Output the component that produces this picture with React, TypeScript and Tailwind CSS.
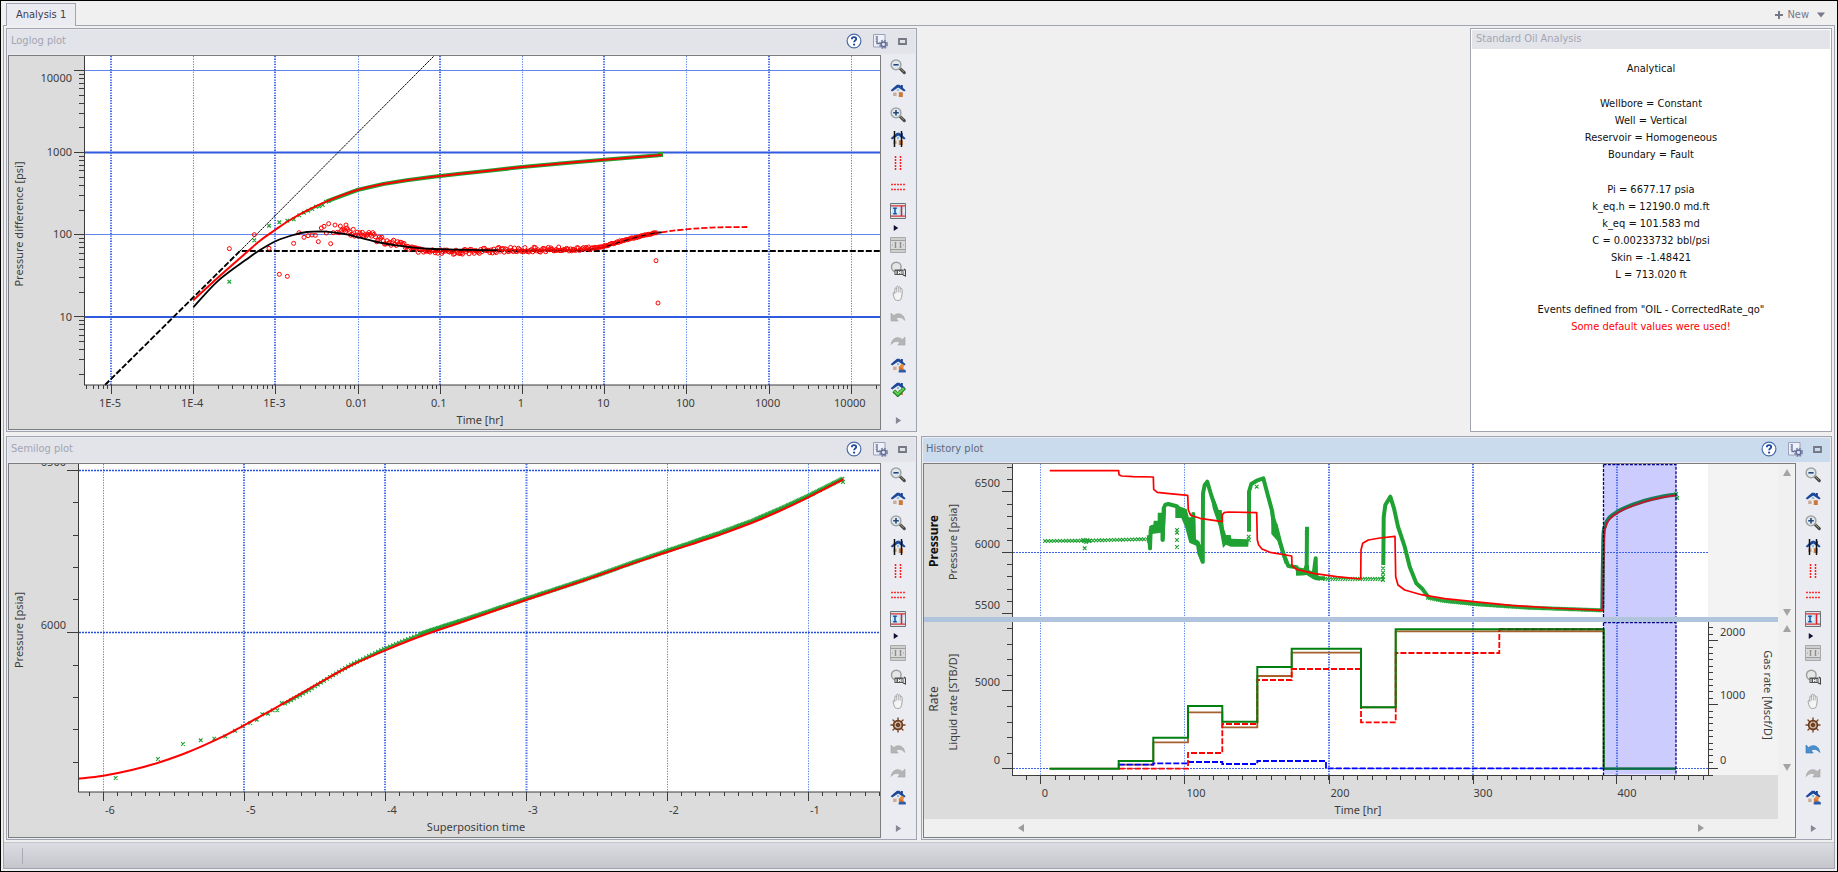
import type { ReactNode } from 'react'

type Pt = [number, number]

const BLUE = '#3b63e6'
const GREEN = '#1fa233'
const AXIS = '#3c3c3c'

// curves are digitised on a 3x grid, this brings them back to plot units
const place = (ox: number, oy: number, pts: Pt[]): Pt[] => pts.map(([x, y]) => [ox + x / 3, oy + y / 3])

const line = (pts: Pt[]) => 'M' + pts.map(([x, y]) => `${x.toFixed(1)} ${y.toFixed(1)}`).join('L')

const smooth = (pts: Pt[]) => {
  let d = `M${pts[0][0].toFixed(1)} ${pts[0][1].toFixed(1)}`
  for (let i = 0; i < pts.length - 1; i++) {
    const a = pts[i - 1] ?? pts[i]
    const b = pts[i]
    const c = pts[i + 1]
    const e = pts[i + 2] ?? c
    d += `C${(b[0] + (c[0] - a[0]) / 6).toFixed(1)} ${(b[1] + (c[1] - a[1]) / 6).toFixed(1)} ${(c[0] - (e[0] - b[0]) / 6).toFixed(1)} ${(c[1] - (e[1] - b[1]) / 6).toFixed(1)} ${c[0].toFixed(1)} ${c[1].toFixed(1)}`
  }
  return d
}

const at = (pts: Pt[], x: number) => {
  for (let i = 0; i < pts.length - 1; i++) {
    const [x0, y0] = pts[i]
    const [x1, y1] = pts[i + 1]
    if (x >= x0 && x <= x1) return y0 + ((y1 - y0) * (x - x0)) / (x1 - x0)
  }
  return pts[pts.length - 1][1]
}

const noise = (n: number) => {
  const v = Math.sin(n * 12.9898) * 43758.5453
  return (v - Math.floor(v)) * 2 - 1
}

const crosses = (pts: Pt[]) => pts.map(([x, y]) => `M${(x - 1.8).toFixed(1)} ${(y - 1.8).toFixed(1)}l3.6 3.6m0 -3.6l-3.6 3.6`).join('')

const range = (from: number, to: number, step: number) => {
  const out: number[] = []
  for (let v = from; v <= to + 0.001; v += step) out.push(v)
  return out
}

const logMinors = (origin: number, decade: number, from: number, to: number, dir: 1 | -1) => {
  const out: number[] = []
  for (let k = -1; k < 11; k++) {
    for (let m = 2; m < 10; m++) {
      const v = origin + dir * decade * (k + Math.log10(m))
      if (v > from && v < to) out.push(v)
    }
  }
  return out
}

const TEXT = 'fill-[#3c3c3c] font-["Noto_Sans","Open_Sans",sans-serif] text-[11px]'

function Label({ x, y, anchor = 'middle', children }: { x: number; y: number; anchor?: 'start' | 'middle' | 'end'; children: ReactNode }) {
  return (
    <text x={x} y={y} textAnchor={anchor} className={TEXT}>
      {children}
    </text>
  )
}

function AxisTitle({ x, y, turn = -90, children }: { x: number; y: number; turn?: number; children: ReactNode }) {
  return (
    <text transform={`translate(${x} ${y}) rotate(${turn})`} textAnchor="middle" className={TEXT}>
      {children}
    </text>
  )
}

function VGrid({ x, y1, y2, bold }: { x: number; y1: number; y2: number; bold?: boolean }) {
  return (
    <line
      x1={x}
      x2={x}
      y1={y1}
      y2={y2}
      stroke={bold ? '#456ceb' : '#5f82f0'}
      strokeWidth={bold ? 2 : 1}
      strokeDasharray="1.3 1.3"
    />
  )
}

const ticksH = (xs: number[], y: number, len: number) => xs.map((x) => `M${Math.round(x) + 0.5} ${y}v${len}`).join('')
const ticksV = (ys: number[], x: number, len: number) => ys.map((y) => `M${x} ${Math.round(y) + 0.5}h${len}`).join('')

/* ---------- Loglog ---------- */

const logPressure = place(0, 0, [
  [580, 901], [655, 832], [740, 757], [780, 722], [825, 690], [870, 660], [920, 632], [980, 604], [1072, 570],
  [1150, 552], [1220, 541], [1300, 530], [1380, 521], [1480, 511], [1566, 501], [1690, 490], [1813, 479], [1985, 465],
])

const logDerivative = place(0, 0, [
  [580, 922], [655, 842], [740, 778], [780, 750], [830, 722], [880, 705], [920, 696], [960, 694], [1000, 697],
  [1040, 703], [1080, 713], [1130, 726], [1180, 735], [1240, 743], [1300, 747], [1380, 749], [1500, 751],
  [1730, 751], [1780, 747], [1820, 739], [1860, 726], [1920, 709], [1960, 700], [1985, 697],
])

const logForecast = place(0, 0, [[1985, 697], [2020, 692], [2080, 686], [2160, 682], [2242, 681]])

const logEarlyCrosses = place(0, 0, [
  [688, 845], [763, 721], [807, 677], [838, 667], [862, 662], [881, 658], [898, 646], [912, 638], [925, 632],
  [937, 627], [948, 620], [958, 619], [968, 615], [978, 605], [986, 603],
])

const derivativeScatter = place(0, 0, [
  [688, 746], [763, 704], [807, 745], [838, 823], [862, 829], [881, 730], [897, 698], [912, 712], [924, 707],
  [936, 705], [946, 706], [955, 725], [964, 684], [972, 679], [979, 699], [986, 671], [992, 731], [1000, 698],
  [1005, 675], [1012, 697], [1038, 675], [1968, 782], [1974, 909],
])

const derivativeBase = place(0, 0, [
  [1016, 688], [1072, 698], [1100, 704], [1150, 720], [1200, 732], [1260, 754], [1300, 757], [1380, 756],
  [1500, 750], [1730, 748], [1800, 742], [1860, 724], [1920, 709], [1960, 700], [1980, 698],
])

const derivativeCloud: Pt[] = range(339, 657, 1.3).map((x, i) => {
  const spread = x < 400 ? 4 : x < 560 ? 2.6 : x < 590 ? 1.6 : 0.7
  return [x, at(derivativeBase, x) + noise(i + 1) * spread]
})

const Circles = ({ pts }: { pts: Pt[] }) => (
  <g fill="none" stroke="#ff0000">
    {pts.map(([x, y], i) => (
      <circle key={i} cx={x} cy={y} r={2} />
    ))}
  </g>
)

function LoglogChart() {
  const xs = range(111, 852, 82.2)
  const xNames = ['1E-5', '1E-4', '1E-3', '0.01', '0.1', '1', '10', '100', '1000', '10000']
  const ys = [70, 152, 234, 316]
  return (
    <svg viewBox="9 56 871 373" className="block h-full w-full" role="img" aria-label="Loglog plot">
      <rect x={85} y={56} width={795} height={329} fill="#fff" />
      {xs.map((x, i) => (
        <VGrid key={x} x={i % 2 ? Math.round(x) + 0.5 : Math.round(x)} y1={56} y2={385} bold={i % 2 === 0} />
      ))}
      <path d="M85 70.5H880M85 234.5H880" stroke="#6484ee" />
      <path d="M85 152.5H880M85 317H880" stroke="#2f5be0" strokeWidth={2} />
      <path d="M240 251L434 56" stroke="#000" strokeDasharray="2.4 0.8" />
      <path d="M105 385L240 251H880" stroke="#000" strokeWidth={1.9} strokeDasharray="6 2" fill="none" />
      <path d={line(logPressure.filter(([x]) => x > 325))} stroke={GREEN} strokeWidth={4} fill="none" />
      <path d={crosses(logEarlyCrosses)} stroke={GREEN} strokeWidth={1.2} />
      <rect x={658} y={152} width={5} height={5} fill={GREEN} />
      <path d={smooth(logPressure)} stroke="#ff0000" strokeWidth={2} fill="none" />
      <Circles pts={[...derivativeScatter, ...derivativeCloud.filter(([x]) => x < 500)]} />
      <path d={smooth(logDerivative)} stroke="#000" strokeWidth={1.8} fill="none" />
      <Circles pts={derivativeCloud.filter(([x]) => x >= 500)} />
      <path d={line(logDerivative.filter(([x]) => x > 605))} stroke="#000" strokeDasharray="5 4" fill="none" />
      <path d={smooth(logForecast)} stroke="#ff0000" strokeWidth={1.8} strokeDasharray="6 2" fill="none" />
      <path d="M84.5 56V385M84 385H880" stroke={AXIS} fill="none" />
      <path
        d={
          ticksV(ys, 74, 10) +
          ticksV(logMinors(316.5, 82.2, 62, 384, -1), 79, 5) +
          ticksH(xs, 385, 9) +
          ticksH(logMinors(111, 82.2, 85, 880, 1), 385, 4)
        }
        stroke={AXIS}
      />
      {xNames.map((n, i) => (
        <Label key={n} x={110 + i * 82.2} y={407}>
          {n}
        </Label>
      ))}
      <Label x={72} y={82} anchor="end">10000</Label>
      <Label x={72} y={156} anchor="end">1000</Label>
      <Label x={72} y={238} anchor="end">100</Label>
      <Label x={72} y={321} anchor="end">10</Label>
      <Label x={480} y={424}>Time [hr]</Label>
      <AxisTitle x={23} y={224}>Pressure difference [psi]</AxisTitle>
    </svg>
  )
}

/* ---------- Semilog ---------- */

const semilogModel = place(0, 430, [
  [235, 1046], [310, 1037], [395, 1020], [475, 998], [550, 972], [610, 947], [680, 914], [732, 886], [840, 826],
  [950, 763], [1050, 708], [1156, 661], [1270, 616], [1380, 578], [1580, 509], [1750, 452], [1870, 410], [2000, 367],
  [2080, 341], [2160, 314], [2260, 277], [2345, 240], [2425, 202], [2530, 148],
])

const semilogEarly = place(0, 430, [
  [347, 1044], [474, 987], [549, 942], [602, 931], [643, 926], [676, 919], [705, 902], [728, 889], [751, 879],
  [770, 869], [787, 853], [804, 851], [818, 841], [832, 841], [845, 819],
])

// measured minus model, in plot units
const semilogShift: Pt[] = [[280, 1], [310, 1.5], [330, 0], [380, -2], [430, -2.5], [470, -1.5], [530, -1], [600, -0.5], [700, -1.8], [770, -2], [845, -1]]

const semilogData: Pt[] = [...range(285, 420, 3), ...range(421, 843, 1.4)].map((x) => [x, at(semilogModel, x) + at(semilogShift, x)])

function SemilogChart() {
  const xs = [103, 244, 385, 526, 667, 808]
  return (
    <svg viewBox="9 464 871 373" className="block h-full w-full" role="img" aria-label="Semilog plot">
      <rect x={79} y={464} width={801} height={328} fill="#fff" />
      <VGrid x={103.5} y1={464} y2={792} />
      <VGrid x={244} y1={464} y2={792} bold />
      <VGrid x={385} y1={464} y2={792} bold />
      <VGrid x={526.5} y1={464} y2={792} bold />
      <VGrid x={667.5} y1={464} y2={792} />
      <VGrid x={808.5} y1={464} y2={792} />
      <path d="M79 470.5H879M79 632.5H879" stroke="#2450dc" strokeWidth={1.6} strokeDasharray="2 1" />
      <path d={crosses([...semilogEarly, ...semilogData, [843, 482]])} stroke={GREEN} strokeWidth={1.1} />
      <path d={smooth(semilogModel)} stroke="#ff0000" strokeWidth={2} fill="none" />
      <path d="M78.5 464V792M78 792H880" stroke={AXIS} fill="none" />
      <path
        d={
          ticksV([470, 632], 67, 11) +
          ticksV([502, 535, 567, 599, 665, 697, 729, 762], 73, 5) +
          ticksH(xs, 792, 9) +
          ticksH(range(89, 880, 14.1), 792, 4)
        }
        stroke={AXIS}
      />
      {xs.map((x, i) => (
        <Label key={x} x={x + 7} y={814}>
          {i - 6}
        </Label>
      ))}
      <Label x={66} y={466} anchor="end">6500</Label>
      <Label x={66} y={629} anchor="end">6000</Label>
      <Label x={476} y={831}>Superposition time</Label>
      <AxisTitle x={23} y={630}>Pressure [psia]</AxisTitle>
    </svg>
  )
}

/* ---------- History ---------- */

const histModel = place(920, 430, [
  [389, 122], [596, 122], [597, 134], [605, 138], [640, 140], [700, 141], [701, 178], [712, 187], [740, 190], [803, 196],
  [805, 240], [812, 256], [840, 265], [907, 275], [907, 255], [912, 248], [925, 246], [1010, 248], [1012, 330],
  [1016, 345], [1026, 357], [1050, 367], [1115, 378], [1116, 408], [1130, 418], [1180, 430], [1250, 440], [1322, 447],
  [1323, 360], [1328, 340], [1345, 330], [1380, 324], [1425, 319], [1427, 440], [1434, 465], [1454, 480], [1504, 494],
  [1574, 506], [1654, 514], [1774, 526], [1894, 534], [2049, 541],
])

const histBuildup = place(920, 430, [
  [2049, 541], [2052, 330], [2057, 290], [2065, 272], [2080, 257], [2114, 237], [2174, 215], [2224, 203], [2267, 196],
])

const histThick: Pt[][] = [
  [[683, 322], [689, 340], [690, 355], [692, 300], [697, 290], [728, 290], [728, 330], [731, 235], [736, 224], [745, 222], [770, 229], [785, 243], [790, 240], [797, 262], [804, 285], [810, 310], [818, 335], [820, 252], [822, 330], [833, 338], [838, 370], [848, 395], [849, 190], [854, 165], [862, 155], [872, 190], [885, 230], [893, 255], [903, 270], [906, 300], [914, 330], [985, 340]],
  [[987, 305], [987, 185], [994, 162], [1010, 152], [1030, 145], [1042, 190], [1057, 245], [1062, 290], [1067, 285], [1080, 335], [1090, 370], [1105, 408], [1130, 412], [1136, 430], [1152, 430], [1160, 405], [1161, 290]],
  [[1161, 405], [1162, 428], [1180, 440], [1187, 385], [1188, 445], [1215, 445]],
  [[1390, 405], [1391, 262], [1396, 225], [1411, 200], [1422, 235], [1434, 290], [1454, 350], [1469, 410], [1489, 460], [1508, 478], [1524, 500]],
]

// dense clusters where the crosses run together
const histBlobs: Pt[][] = [
  [[680, 316], [688, 316], [688, 288], [700, 286], [701, 272], [713, 272], [713, 248], [728, 248], [734, 222], [738, 240], [733, 332], [722, 332], [722, 308], [696, 312], [694, 358], [686, 356]],
  [[766, 228], [786, 232], [800, 238], [806, 262], [815, 262], [815, 248], [825, 248], [826, 332], [836, 334], [853, 362], [853, 400], [844, 400], [830, 348], [808, 338], [795, 290], [784, 264], [766, 264]],
  [[872, 185], [887, 215], [896, 240], [905, 240], [910, 290], [918, 315], [932, 315], [934, 326], [985, 328], [985, 350], [932, 350], [918, 344], [909, 354], [897, 290], [878, 235]],
  [[1044, 190], [1058, 240], [1070, 278], [1084, 335], [1096, 372], [1106, 402], [1094, 402], [1072, 332], [1054, 312], [1054, 270]],
  [[1128, 410], [1158, 416], [1186, 428], [1200, 440], [1200, 452], [1180, 448], [1160, 435], [1128, 437]],
]

const histCrossTrack = place(920, 430, [[375, 333], [500, 332], [690, 327]])
const histLateTrack = place(920, 430, [[1215, 447], [1389, 447]])
const histDrawdownTrack = place(920, 430, [[1524, 503], [1574, 513], [1674, 523], [1824, 533], [2049, 541]])

const histCrosses: Pt[] = [
  ...range(1045, 1146, 3).map((x): Pt => [x, at(histCrossTrack, x)]),
  ...range(1083, 1090, 1.5).map((x, i): Pt => [x, 541 + (i % 3) - 1]),
  ...range(1325, 1383, 2.5).map((x): Pt => [x, at(histLateTrack, x)]),
  ...range(1428, 1602, 2).map((x): Pt => [x, at(histDrawdownTrack, x)]),
  ...place(920, 430, [[494, 355], [771, 300], [771, 308], [771, 330], [771, 351], [1010, 170], [986, 320], [987, 330], [1160, 310], [1389, 415], [1389, 428], [1389, 440], [1389, 450]]),
]

const liquid: Pt[] = [
  [389, 1016], [596, 1016], [596, 993], [700, 993], [700, 923], [804, 923], [804, 828], [907, 828], [907, 875],
  [1012, 875], [1012, 711], [1115, 711], [1115, 656], [1323, 656], [1323, 832], [1427, 832], [1427, 598],
  [2051, 598], [2051, 1016], [2268, 1016],
]
const oil: Pt[] = [
  [389, 1016], [596, 1016], [596, 1004], [700, 1004], [700, 937], [804, 937], [804, 847], [907, 847], [907, 892],
  [1012, 892], [1012, 738], [1115, 738], [1115, 668], [1323, 668], [1323, 832], [1427, 832], [1427, 604],
  [2051, 604], [2051, 1016],
]
const gas: Pt[] = [
  [596, 1016], [804, 1016], [804, 969], [907, 969], [907, 882], [1012, 882], [1012, 750], [1115, 750], [1115, 717],
  [1323, 717], [1323, 877], [1427, 877], [1427, 669], [1738, 669], [1738, 598], [2051, 598],
]
const water: Pt[] = [
  [596, 1004], [700, 1004], [700, 1000], [804, 1000], [804, 996], [907, 996], [907, 1002], [1012, 1002], [1012, 993],
  [1218, 993], [1218, 1015], [2051, 1015],
]

function HistoryChart() {
  const xs = [1040, 1184, 1329, 1473, 1616]
  return (
    <svg viewBox="924 464 854 355" className="block h-full w-full" role="img" aria-label="History plot">
      <rect x={1013} y={464} width={695} height={311} fill="#fff" />
      <rect x={1708} y={464} width={70} height={311} fill="#f3f3f3" />
      {xs.map((x, i) => (
        <VGrid key={x} x={i > 1 ? x : x + 0.5} y1={464} y2={775} bold={i > 1} />
      ))}
      <path d="M1013 552.5H1708M1013 768.5H1708" stroke={BLUE} strokeDasharray="2 1" />
      <rect x={1603.5} y={464.5} width={72.5} height={310} fill="#ccccff" />
      <VGrid x={1617} y1={464} y2={775} bold />
      <path d="M1604 552.5H1676" stroke={BLUE} strokeDasharray="2 1" />

      <path d={crosses(histCrosses)} stroke={GREEN} strokeWidth={1.1} />
      <g fill="none" stroke={GREEN} strokeWidth={4} strokeLinejoin="round">
        {histThick.map((pts, i) => (
          <path key={i} d={line(place(920, 430, pts))} />
        ))}
      </g>
      <g fill={GREEN}>
        {histBlobs.map((pts, i) => (
          <path key={i} d={line(place(920, 430, pts)) + 'z'} />
        ))}
      </g>
      <path d={smooth(histBuildup.map(([x, y]) => [x - 0.7, y - 0.7]))} fill="none" stroke="#177f55" strokeWidth={4} />
      <path d={crosses([[1676, 494], [1677, 498]])} stroke={GREEN} strokeWidth={1.5} />
      <path d={line(histModel)} fill="none" stroke="#ff0000" strokeWidth={1.7} strokeLinejoin="round" />
      <path d={smooth(histBuildup)} fill="none" stroke="#d0102e" strokeWidth={1.7} />

      <g fill="none" strokeWidth={1.8}>
        <path d={line(place(920, 430, oil))} stroke="#a5602c" />
        <path d={line(place(920, 430, water))} stroke="#0000ff" strokeDasharray="6 2" />
        <path d={line(place(920, 430, gas))} stroke="#ff0000" strokeDasharray="6 2" />
        <path d={line(place(920, 430, liquid))} stroke="#008010" strokeWidth={2} />
        <path d={line(place(920, 430, [[1738, 598], [2051, 598]]))} stroke="#1d5c10" strokeWidth={2} strokeDasharray="6 2" />
        <path d="M1604 768.5H1676" stroke="#0a6650" strokeWidth={2} />
      </g>
      <path d="M1603.5 464.5H1676V775M1603.5 464.5V775M1603.5 622.5H1676" stroke="#00008b" strokeWidth={1.3} strokeDasharray="3 1.4" fill="none" />
      <rect x={924} y={617} width={854} height={5} fill="#b0c4de" />

      <path d="M1012.5 464V617M1012.5 622V775M1012 775.5H1709M1708.5 622V775" stroke={AXIS} fill="none" />
      <path
        d={
          ticksV([491, 552, 613], 1002, 10) +
          ticksV([467, 479, 504, 516, 528, 540, 564, 576, 589, 601], 1007, 5) +
          ticksV([690, 768], 1002, 10) +
          ticksV([628, 644, 659, 675, 706, 722, 737, 753], 1007, 5) +
          ticksV([640, 704, 768], 1709, 9) +
          ticksV(range(627.4, 775, 6.4), 1709, 4) +
          ticksH(xs, 775, 9) +
          ticksH(range(1026, 1704, 14.4), 775, 5)
        }
        stroke={AXIS}
      />
      <Label x={1000} y={487} anchor="end">6500</Label>
      <Label x={1000} y={548} anchor="end">6000</Label>
      <Label x={1000} y={609} anchor="end">5500</Label>
      <Label x={1000} y={686} anchor="end">5000</Label>
      <Label x={1000} y={764} anchor="end">0</Label>
      <Label x={1720} y={636} anchor="start">2000</Label>
      <Label x={1720} y={699} anchor="start">1000</Label>
      <Label x={1720} y={764} anchor="start">0</Label>
      <Label x={1045} y={797}>0</Label>
      <Label x={1196} y={797}>100</Label>
      <Label x={1340} y={797}>200</Label>
      <Label x={1483} y={797}>300</Label>
      <Label x={1627} y={797}>400</Label>
      <Label x={1358} y={814}>Time [hr]</Label>
      <text
        transform="translate(938 541) rotate(-90)"
        textAnchor="middle"
        className='fill-[#111] font-["Noto_Sans","Open_Sans",sans-serif] text-xs font-bold'
      >
        Pressure
      </text>
      <text
        transform="translate(938 699) rotate(-90)"
        textAnchor="middle"
        className='fill-[#3c3c3c] font-["Noto_Sans","Open_Sans",sans-serif] text-xs'
      >
        Rate
      </text>
      <AxisTitle x={957} y={542}>Pressure [psia]</AxisTitle>
      <AxisTitle x={957} y={702}>Liquid rate [STB/D]</AxisTitle>
      <AxisTitle x={1764} y={695} turn={90}>Gas rate [Mscf/D]</AxisTitle>
    </svg>
  )
}

/* ---------- Icons ---------- */

function Icon({ children }: { children: ReactNode }) {
  return (
    <svg viewBox="0 0 16 16" className="h-4 w-4" fill="none" aria-hidden="true">
      {children}
    </svg>
  )
}

const Lens = ({ plus }: { plus?: boolean }) => (
  <Icon>
    <path d="M10 9.5L14.3 13.6" stroke="#4a4a44" strokeWidth={3} strokeLinecap="round" />
    <path d="M10.5 9.6L13.6 12.5" stroke="#8f8f84" strokeLinecap="round" />
    <circle cx={6} cy={5.8} r={4.9} fill="#dfe8ee" stroke="#a3a5a3" strokeWidth={1.5} />
    <path d={plus ? 'M3.2 5.8h5.6M6 3v5.6' : 'M3.4 5.8h5.2'} stroke="#24477c" strokeWidth={1.6} />
  </Icon>
)

const House = ({ children }: { children?: ReactNode }) => (
  <Icon>
    <path d="M2.8 8L7.5 4.5L13.2 8V14.300H2.800Z" fill="#eceae8" />
    <path d="M10.800 2h2v4h-2z" fill="#16408f" />
    <path d="M7 1.800h2.400L15.600 7.200L14.200 8.600L8.200 4.600L2.200 8.400L.7 7.200L4 4.200z" fill="#1b469a" />
    <circle cx={8} cy={7} r={1.200} fill="#7fbfe8" />
    <path d="M3.200 9.600h3.400v3.400h-3.400z" fill="#c4ad9c" />
    <path d="M8.800 9.200h4V14h-4z" fill="#c9793f" />
    {children}
  </Icon>
)

const HouseBars = () => (
  <House>
    <path d="M4.5 0v16M11.5 0v16" stroke="#111" strokeWidth={1.5} />
  </House>
)

const HouseUser = () => (
  <House>
    <circle cx={12} cy={9} r={2} fill="#e88a3c" />
    <path d="M8.500 15c0-3 5.500-3.800 7.300-1.500V15.500H9z" fill="#2a5cab" />
    <path d="M10.6 11l2 2.6l1-2.8z" fill="#e36f22" />
  </House>
)

const HouseCheck = () => (
  <House>
    <path d="M3.800 9.800l4 4L14.500 7" stroke="#1c7d22" strokeWidth={3.800} />
    <path d="M4.300 10l3.500 3.300L14 7.300" stroke="#5fd052" strokeWidth={2} />
  </House>
)

const VBars = () => (
  <Icon>
    <path d="M5.5 1v14M10.5 1v14" stroke="#ff1a1a" strokeWidth={1.5} strokeDasharray="2 1" />
  </Icon>
)

const HBars = () => (
  <Icon>
    <path d="M1 5.5h14.5M1 10.5h14.5" stroke="#ff3030" strokeWidth={1.5} strokeDasharray="2 1" />
  </Icon>
)

const Bounds = () => (
  <Icon>
    <path d="M.5 .5h15v15H.5z" fill="#d8e6ee" stroke="#6d7276" />
    <path d="M1 4h14v8H1z" fill="#c6e8f8" />
    <path d="M1 2.800h14M1 13.200h14" stroke="#e03030" strokeWidth={1.3} />
    <path d="M11.5 3v10" stroke="#e02020" strokeWidth={1.5} />
    <path d="M5 5.5v5M3.2 5.2h3.6M3.2 10.8h3.600" stroke="#1d4fa0" strokeWidth={1.5} />
    <path d="M1 8h1.5M7.5 8h2M13.5 8h1.5" stroke="#fff" strokeWidth={3} strokeDasharray="1 1" />
  </Icon>
)

const BoundsOff = () => (
  <Icon>
    <path d="M.5 .5h15v15H.5z" fill="#cfcfcf" stroke="#a9a9a9" />
    <path d="M1 3.5h14M1 12.5h14" stroke="#9d9d9d" />
    <path d="M1 4h14v8H1z" fill="#dadada" />
    <path d="M5.5 5v6M10.5 5v6" stroke="#888" strokeWidth={1.2} />
    <path d="M4.500 6h2M4.500 10h2M9.500 6h2M9.500 10h2M2 8h1M13 8h1" stroke="#999" />
  </Icon>
)

const LensRange = () => (
  <Icon>
    <circle cx={6.3} cy={6} r={4.8} fill="#e4e7e6" stroke="#9b9d9b" strokeWidth={1.4} />
    <path d="M4.5 8.5h9v5.5h-9z" fill="#555" />
    <path d="M6 10v3M12 10v3M8 11.5h2.5M8.5 10v3M10.3 10v3" stroke="#f0f0f0" />
    <path d="M14 8l1.6 1.6V15L13 14" stroke="#444" strokeWidth={1.3} />
  </Icon>
)

const Hand = () => (
  <Icon>
    <path
      d="M5.200 14.800c-1.200-2-2-4.200-2-6.600c0-1.200 1.200-1.300 1.500-.3l.2.600V4c0-1.400 1.500-1.400 1.700 0V2.300c0-1.500 1.700-1.500 1.800 0v.3c.2-1.300 1.700-1.200 1.800.2v1.200c.3-1.100 1.800-.9 1.900.4c.2 3.200 0 7.600-1.500 10.400c-1.500.9-4 .9-5.400 0z"
      fill="#f4f4f4"
      stroke="#a3a3a3"
    />
    <path d="M6.600 4v3.500M8.400 3v4.500M10.200 4v3.500" stroke="#b5b5b5" />
  </Icon>
)

const Undo = ({ active }: { active?: boolean }) => (
  <Icon>
    <path
      d="M1 4v8h7.200L6.200 9.600C8.500 7.600 12 8 14.800 11.500C14.500 5.500 8.500 2.500 3.600 6.500z"
      fill={active ? '#4a8fd0' : '#b4b4b4'}
      stroke={active ? '#3273b4' : '#a6a6a6'}
      strokeWidth={0.6}
    />
  </Icon>
)

const Redo = () => (
  <Icon>
    <path d="M15 4v8H7.800L9.800 9.600C7.500 7.600 4 8 1.200 11.500C1.500 5.500 7.500 2.500 12.400 6.500z" fill="#b4b4b4" stroke="#a6a6a6" strokeWidth={0.6} />
  </Icon>
)

const Wheel = () => (
  <Icon>
    <path d="M8 1v14M1 8h14M3 3l10 10M13 3L3 13" stroke="#7a4524" strokeWidth={1.4} strokeLinecap="round" />
    <circle cx={8} cy={8} r={4.400} fill="#e0c9b8" fillOpacity={0.6} stroke="#6b3818" strokeWidth={1.7} />
    <circle cx={8} cy={8} r={1.500} fill="#8a5a3a" stroke="#4f2a12" />
  </Icon>
)

const Help = () => (
  <svg viewBox="0 0 16 16" className="h-4 w-4" aria-hidden="true">
    <circle cx={8} cy={8} r={6.9} fill="#fff" stroke="#4a6ba8" strokeWidth={1.2} />
    <path d="M5.800 6.200c0-2.900 4.500-2.700 4.400-.2c0 1.500-2.100 1.500-2.100 3.200" fill="none" stroke="#1d48a0" strokeWidth={1.8} />
    <circle cx={8.1} cy={11.6} r={1.1} fill="#1d48a0" />
  </svg>
)

const Settings = () => (
  <Icon>
    <path d="M1.500 1.500h11.500v12.500h-11.500z" fill="#eef1f8" stroke="#98a0bc" />
    <path d="M5 3v7.500h4" stroke="#65709c" strokeWidth={1.3} />
    <path d="M3.500 3.500h1.500M3.500 6h1.500M3.500 8.500h1.500" stroke="#7d86ac" />
    <circle cx={11.5} cy={11.3} r={3.8} stroke="#7c84a8" strokeWidth={1.6} strokeDasharray="1.8 1.2" />
    <circle cx={11.5} cy={11.3} r={2.4} fill="#dfe3f0" stroke="#626b95" strokeWidth={1.5} />
  </Icon>
)

const Restore = () => (
  <svg viewBox="0 0 9 7" className="h-[7px] w-[9px]" aria-hidden="true">
    <path d="M1 1h7v5H1z" fill="none" stroke="#737783" strokeWidth={1.8} />
  </svg>
)

const Arrow = ({ dir, className }: { dir: 'up' | 'down' | 'left' | 'right' | 'caret'; className: string }) => {
  const shape = {
    up: 'M0 8L4 1L8 8z',
    down: 'M0 1L4 8L8 1z',
    left: 'M7 0L1 4L7 8z',
    right: 'M1 0L7 4L1 8z',
    caret: 'M0 1.500H8L4 6.500z',
  }[dir]
  return (
    <svg viewBox="0 0 8 8" className={className} fill="currentColor" aria-hidden="true">
      <path d={shape} />
    </svg>
  )
}

/* ---------- Window parts ---------- */

type Tool = { name: string; icon: ReactNode }

const zoomTools: Tool[] = [
  { name: 'Zoom out', icon: <Lens /> },
  { name: 'Reset view', icon: <House /> },
  { name: 'Zoom in', icon: <Lens plus /> },
  { name: 'Reset horizontally', icon: <HouseBars /> },
  { name: 'Vertical cursors', icon: <VBars /> },
  { name: 'Horizontal cursors', icon: <HBars /> },
  { name: 'Bounds', icon: <Bounds /> },
]

const rangeTools: Tool[] = [
  { name: 'Fixed bounds', icon: <BoundsOff /> },
  { name: 'Zoom to range', icon: <LensRange /> },
  { name: 'Pan', icon: <Hand /> },
]

const wheelTool: Tool = { name: 'Interactive adjust', icon: <Wheel /> }
const redoTool: Tool = { name: 'Redo', icon: <Redo /> }
const userTool: Tool = { name: 'User view', icon: <HouseUser /> }

const loglogTools: Tool[] = [...rangeTools, { name: 'Undo', icon: <Undo /> }, redoTool, userTool, { name: 'Accept view', icon: <HouseCheck /> }]
const semilogTools: Tool[] = [...rangeTools, wheelTool, { name: 'Undo', icon: <Undo /> }, redoTool, userTool]
const historyTools: Tool[] = [...rangeTools, wheelTool, { name: 'Undo', icon: <Undo active /> }, redoTool, userTool]

function ToolButton({ name, icon }: Tool) {
  return (
    <button type="button" aria-label={name} className="flex h-6 w-6 items-center justify-center">
      {icon}
    </button>
  )
}

function PlotPanel({ title, active, tools, children }: { title: string; active?: boolean; tools: Tool[]; children: ReactNode }) {
  return (
    <section className="flex min-h-0 min-w-0 flex-col border border-[#a1a5b1] bg-[#ebecf1] p-px">
      <header
        className={`flex h-6 shrink-0 items-center justify-between pr-2 pb-[2px] pl-[3px] ${
          active ? 'bg-[#cadbed] text-[#62687c]' : 'bg-[#e3e4e9] text-[#a2a5b4]'
        }`}
      >
        <h2>{title}</h2>
        <div className="flex items-center gap-[10px]">
          <button type="button" aria-label="Help">
            <Help />
          </button>
          <button type="button" aria-label="Plot settings">
            <Settings />
          </button>
          <button type="button" aria-label="Maximize">
            <Restore />
          </button>
        </div>
      </header>
      <div className="mt-px flex min-h-0 flex-1">
        <div className="flex min-w-0 flex-1 flex-col border border-[#7d7d7d] bg-[#dcdcdc]">{children}</div>
        <div className="flex w-[34px] shrink-0 flex-col items-center overflow-hidden" role="toolbar" aria-label={`${title} tools`}>
          {zoomTools.map((t) => (
            <ToolButton key={t.name} {...t} />
          ))}
          <button type="button" aria-label="Bounds options" className="flex h-[10px] shrink-0 items-center pr-1 text-[#111133]">
            <Arrow dir="right" className="h-[6px] w-[6px]" />
          </button>
          {tools.map((t) => (
            <ToolButton key={t.name} {...t} />
          ))}
          <button type="button" aria-label="More tools" className="mt-auto mb-[6px] text-[#858795]">
            <Arrow dir="right" className="h-[7px] w-[7px]" />
          </button>
        </div>
      </div>
    </section>
  )
}

function VScroll({ name }: { name: string }) {
  return (
    <div className="flex flex-1 flex-col items-center justify-between pt-1 pb-1 text-[#a3a3a3]">
      <button type="button" aria-label={`${name} up`}>
        <Arrow dir="up" className="h-2 w-2" />
      </button>
      <button type="button" aria-label={`${name} down`}>
        <Arrow dir="down" className="h-2 w-2" />
      </button>
    </div>
  )
}

const results = [
  'Analytical', '', 'Wellbore = Constant', 'Well = Vertical', 'Reservoir = Homogeneous', 'Boundary = Fault', '',
  'Pi = 6677.17 psia', 'k_eq.h = 12190.0 md.ft', 'k_eq = 101.583 md', 'C = 0.00233732 bbl/psi', 'Skin = -1.48421',
  'L = 713.020 ft', '', 'Events defined from "OIL - CorrectedRate_qo"',
]

export default function App() {
  return (
    <div className='flex h-screen min-h-[560px] flex-col border border-black bg-[#f0f0f0] px-[2px] pt-[2px] pb-[2px] font-["DejaVu_Sans_Condensed","DejaVu_Sans",sans-serif] text-[11px] leading-4'>
      <nav className="relative z-10 -mb-px flex h-[23px] shrink-0 justify-between pl-[3px]">
        <button type="button" className="border border-b-0 border-[#a1a5b1] bg-[#ebecf1] px-[9px] text-[#3b3c55]">
          Analysis 1
        </button>
        <button type="button" className="flex items-center gap-1 pr-[10px] text-[#777989]">
          <svg viewBox="0 0 8 8" className="h-2 w-2" aria-hidden="true">
            <path d="M4 0v8M0 4h8" stroke="currentColor" strokeWidth={2} />
          </svg>
          New
          <Arrow dir="caret" className="ml-1 h-2 w-2" />
        </button>
      </nav>

      <main className="flex min-h-0 flex-1 flex-col border border-[#a1a5b1]">
        <div className="grid min-h-0 flex-1 grid-cols-2 grid-rows-2 gap-1 p-[2px]">
          <PlotPanel title="Loglog plot" tools={loglogTools}>
            <LoglogChart />
          </PlotPanel>

          <div className="flex min-h-0 justify-end">
            <section className="flex w-[362px] flex-col border border-[#a1a5b1] bg-white p-px">
              <h2 className="bg-[#e3e4e9] pt-px pb-[2px] pl-1 text-[#a2a5b4]">Standard Oil Analysis</h2>
              <div className="pt-[11px] text-center leading-[17px] text-[#111]">
                {results.map((r, i) => (
                  <p key={i} className="min-h-[17px] empty:min-h-[18px]">
                    {r}
                  </p>
                ))}
                <p className="text-[#ff0000]">Some default values were used!</p>
              </div>
            </section>
          </div>

          <PlotPanel title="Semilog plot" tools={semilogTools}>
            <SemilogChart />
          </PlotPanel>

          <PlotPanel title="History plot" active tools={historyTools}>
            <div className="flex min-h-0 flex-1">
              <div className="min-w-0 flex-1">
                <HistoryChart />
              </div>
              <div className="flex w-[17px] shrink-0 flex-col bg-[#f0f0f0] pb-11">
                <VScroll name="Scroll pressure" />
                <VScroll name="Scroll rate" />
              </div>
            </div>
            <div className="flex h-[18px] shrink-0 items-center justify-between bg-[#f0f0f0] pr-[90px] pl-[93px] text-[#9b9b9b]">
              <button type="button" aria-label="Scroll left">
                <Arrow dir="left" className="h-2 w-2" />
              </button>
              <button type="button" aria-label="Scroll right">
                <Arrow dir="right" className="h-2 w-2" />
              </button>
            </div>
          </PlotPanel>
        </div>
        <footer className="flex h-[26px] shrink-0 items-center border-t border-[#c3c5cc] bg-linear-to-b from-[#dcdde2] to-[#c5c6cc] pl-[18px]">
          <span className="h-4 border-l border-[#a9abb5]" />
        </footer>
      </main>
    </div>
  )
}
